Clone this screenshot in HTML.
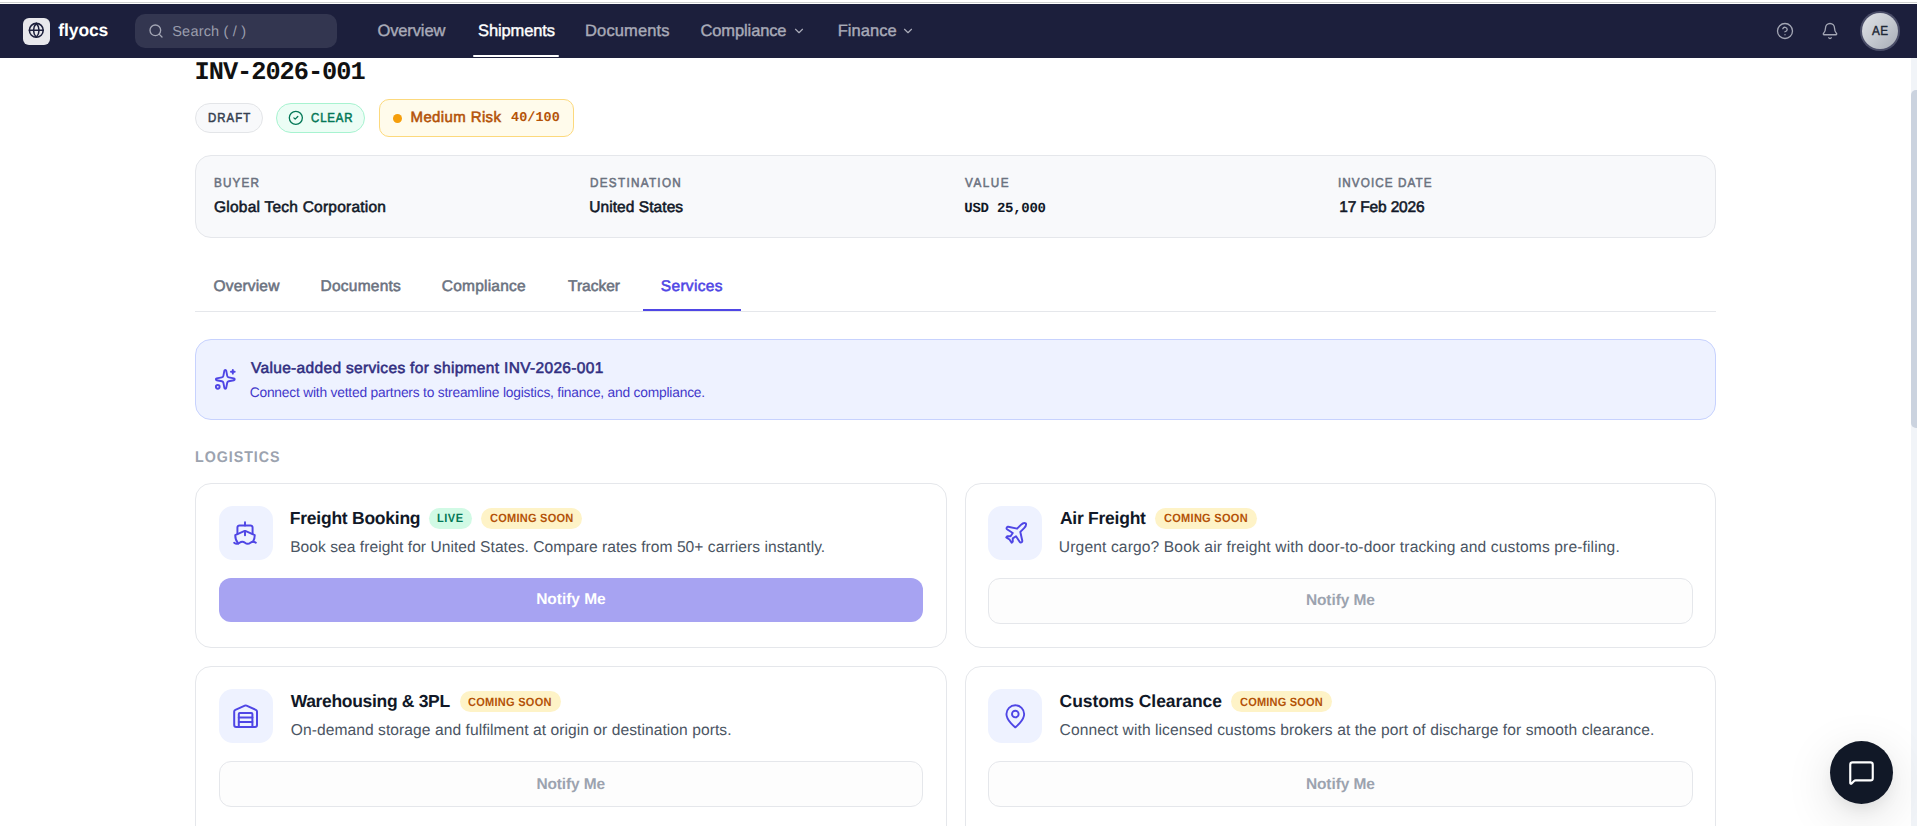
<!DOCTYPE html>
<html><head><meta charset="utf-8">
<style>
*{box-sizing:border-box;margin:0;padding:0}
html,body{width:1917px;height:826px;overflow:hidden;background:#fff}
body{position:relative;font-family:"Liberation Sans",sans-serif}
.a{position:absolute}
.t{position:absolute;white-space:nowrap;line-height:normal;text-rendering:geometricPrecision}
svg{position:absolute;overflow:visible}
.card{position:absolute;border:1px solid #e5e7eb;border-radius:16px;background:#fff}
.ibox{position:absolute;width:54px;height:54px;border-radius:14px;background:#eef2ff}
.badge{position:absolute;height:21px;border-radius:10.5px}
.btn2{position:absolute;border:1px solid #e5e7eb;border-radius:12px;background:#fdfdfd}
</style></head><body>
<!-- top strip -->
<div class="a" style="left:0;top:2px;width:1917px;height:1px;background:#cfd1d0"></div>
<!-- navbar -->
<div class="a" style="left:0;top:4px;width:1917px;height:54px;background:#1c1f3c"></div>
<div class="a" style="left:23px;top:18px;width:27px;height:27px;border-radius:6px;background:#e8e8ec"></div>
<svg style="left:27.5px;top:22.4px" width="16.6" height="16.6" viewBox="0 0 24 24" fill="none" stroke="#1c1f3c" stroke-width="2.2" stroke-linecap="round" stroke-linejoin="round"><circle cx="12" cy="12" r="10"/><path d="M12 2a14.5 14.5 0 0 0 0 20 14.5 14.5 0 0 0 0-20"/><path d="M2 12h20"/></svg>
<div class="a" style="left:135px;top:14px;width:202px;height:34px;border-radius:10px;background:#333650"></div>
<svg style="left:147.7px;top:23px" width="16" height="16" viewBox="0 0 24 24" fill="none" stroke="#a3a6b4" stroke-width="2" stroke-linecap="round" stroke-linejoin="round"><circle cx="11" cy="11" r="8"/><path d="m21 21-4.3-4.3"/></svg>
<div class="a" style="left:473px;top:55px;width:86px;height:2px;border-radius:1px;background:#fff"></div>
<svg style="left:792px;top:24px" width="14" height="14" viewBox="0 0 24 24" fill="none" stroke="#a9abb8" stroke-width="2" stroke-linecap="round" stroke-linejoin="round"><path d="m6 9 6 6 6-6"/></svg>
<svg style="left:901px;top:24px" width="14" height="14" viewBox="0 0 24 24" fill="none" stroke="#a9abb8" stroke-width="2" stroke-linecap="round" stroke-linejoin="round"><path d="m6 9 6 6 6-6"/></svg>
<svg style="left:1776px;top:22px" width="18" height="18" viewBox="0 0 24 24" fill="none" stroke="#a3a6b4" stroke-width="1.75" stroke-linecap="round" stroke-linejoin="round"><circle cx="12" cy="12" r="10"/><path d="M9.09 9a3 3 0 0 1 5.83 1c0 2-3 3-3 3"/><path d="M12 17h.01"/></svg>
<svg style="left:1821px;top:22px" width="18" height="18" viewBox="0 0 24 24" fill="none" stroke="#a3a6b4" stroke-width="1.75" stroke-linecap="round" stroke-linejoin="round"><path d="M10.268 21a2 2 0 0 0 3.464 0"/><path d="M3.262 15.326A1 1 0 0 0 4 17h16a1 1 0 0 0 .74-1.673C19.41 13.956 18 12.499 18 8A6 6 0 0 0 6 8c0 4.499-1.411 5.956-2.738 7.326"/></svg>
<div class="a" style="left:1860px;top:11px;width:40px;height:40px;border-radius:50%;background:#4a4d68"></div>
<div class="a" style="left:1862px;top:13px;width:36px;height:36px;border-radius:50%;background:linear-gradient(135deg,#dfe1e6 0%,#c6cad1 50%,#a7acb6 100%)"></div>

<!-- scrollbar -->
<div class="a" style="left:1911px;top:58px;width:6px;height:768px;background:#f1f4f8"></div>
<div class="a" style="left:1911px;top:90px;width:6px;height:338px;border-radius:5px 0 0 5px;background:#cbd3df"></div>

<!-- badges -->
<div class="a" style="left:195px;top:103px;width:68px;height:30px;border-radius:15px;background:#f8f9fb;border:1px solid #e3e5e8"></div>
<div class="a" style="left:276px;top:103px;width:89px;height:30px;border-radius:15px;background:#ecfdf5;border:1px solid #a7f3d0"></div>
<svg style="left:288px;top:109.85px" width="15.7" height="15.7" viewBox="0 0 24 24" fill="none" stroke="#047857" stroke-width="2" stroke-linecap="round" stroke-linejoin="round"><circle cx="12" cy="12" r="10"/><path d="m9 12 2 2 4-4"/></svg>
<div class="a" style="left:379px;top:99px;width:195px;height:38px;border-radius:10px;background:#fffbeb;border:1px solid #fcd97d"></div>
<div class="a" style="left:393px;top:113.5px;width:9px;height:9px;border-radius:50%;background:#f59e0b"></div>

<!-- info card -->
<div class="a" style="left:195px;top:155px;width:1521px;height:83px;border-radius:16px;background:#f8f9fb;border:1px solid #e5e7eb"></div>

<!-- tabs -->
<div class="a" style="left:195px;top:311px;width:1521px;height:1px;background:#e5e7eb"></div>
<div class="a" style="left:643px;top:309px;width:98px;height:2px;background:#4f46e5"></div>

<!-- banner -->
<div class="a" style="left:195px;top:339px;width:1521px;height:81px;border-radius:16px;background:#eef2ff;border:1px solid #c7d2fe"></div>
<svg style="left:213.9px;top:367.9px" width="22.6" height="22.6" viewBox="0 0 24 24" fill="none" stroke="#4f46e5" stroke-width="2" stroke-linecap="round" stroke-linejoin="round"><path d="M11.017 2.814a1 1 0 0 1 1.966 0l1.051 5.558a2 2 0 0 0 1.594 1.594l5.558 1.051a1 1 0 0 1 0 1.966l-5.558 1.051a2 2 0 0 0-1.594 1.594l-1.051 5.558a1 1 0 0 1-1.966 0l-1.051-5.558a2 2 0 0 0-1.594-1.594l-5.558-1.051a1 1 0 0 1 0-1.966l5.558-1.051a2 2 0 0 0 1.594-1.594z"/><path d="M20 2v4"/><path d="M22 4h-4"/><circle cx="4" cy="20" r="2"/></svg>

<!-- cards -->
<div class="card" style="left:195px;top:483px;width:752px;height:165px"></div>
<div class="card" style="left:965px;top:483px;width:751px;height:165px"></div>
<div class="card" style="left:195px;top:666px;width:752px;height:200px"></div>
<div class="card" style="left:965px;top:666px;width:751px;height:200px"></div>

<div class="ibox" style="left:219px;top:506px"></div>
<div class="ibox" style="left:988px;top:506px"></div>
<div class="ibox" style="left:219px;top:689px"></div>
<div class="ibox" style="left:988px;top:689px"></div>

<svg style="left:232px;top:520.2px" width="26" height="26" viewBox="0 0 24 24" fill="none" stroke="#4f46e5" stroke-width="1.8" stroke-linecap="round" stroke-linejoin="round"><path d="M12 10.189V14"/><path d="M12 2v3"/><path d="M19 13V7a2 2 0 0 0-2-2H7a2 2 0 0 0-2 2v6"/><path d="M19.38 20A11.6 11.6 0 0 0 21 14l-8.188-3.639a2 2 0 0 0-1.624 0L3 14a11.6 11.6 0 0 0 2.81 7.76"/><path d="M2 21c.6.5 1.2 1 2.5 1 2.5 0 2.5-2 5-2 1.3 0 1.9.5 2.5 1s1.2 1 2.5 1c2.5 0 2.5-2 5-2 1.3 0 1.9.5 2.5 1"/></svg>
<svg style="left:1002.6px;top:519.9px" width="26" height="26" viewBox="0 0 24 24" fill="none" stroke="#4f46e5" stroke-width="1.8" stroke-linecap="round" stroke-linejoin="round"><path d="M17.8 19.2 16 11l3.5-3.5C21 6 21.5 4 21 3c-1-.5-3 0-4.5 1.5L13 8 4.8 6.2c-.5-.1-.9.1-1.1.5l-.3.5c-.2.5-.1 1 .3 1.3L9 12l-2 3H4l-1 1 3 2 2 3 1-1v-3l3-2 3.5 5.3c.3.4.8.5 1.3.3l.5-.2c.4-.3.6-.7.5-1.2z"/></svg>
<svg style="left:226px;top:696px" width="40" height="40" viewBox="0 0 40 40" fill="none" stroke="#4f46e5" stroke-width="2" stroke-linecap="round" stroke-linejoin="round"><path d="M8.2 29V15.6a2 2 0 0 1 1.2-1.8L18.8 9.6a2 2 0 0 1 1.7 0L29.8 13.8a2 2 0 0 1 1.2 1.8V29a2 2 0 0 1-2 2H10.2a2 2 0 0 1-2-2Z"/><path d="M12.8 31V18a1 1 0 0 1 1-1H25.4a1 1 0 0 1 1 1V31"/><path d="M12.8 21.4H26.4"/><path d="M12.8 26H26.4"/></svg>
<svg style="left:1002px;top:703.2px" width="26.6" height="26.6" viewBox="0 0 24 24" fill="none" stroke="#4f46e5" stroke-width="1.7" stroke-linecap="round" stroke-linejoin="round"><path d="M20 10c0 6-8 12-8 12s-8-6-8-12a8 8 0 0 1 16 0Z"/><circle cx="12" cy="10" r="3"/></svg>

<!-- badges in cards -->
<div class="badge" style="left:429px;top:508px;width:43px;background:#d1fae5"></div>
<div class="badge" style="left:481px;top:508px;width:101px;background:#fef3c7"></div>
<div class="badge" style="left:1155px;top:508px;width:102px;background:#fef3c7"></div>
<div class="badge" style="left:460px;top:691px;width:101px;background:#fef3c7"></div>
<div class="badge" style="left:1231px;top:691px;width:101px;background:#fef3c7"></div>

<!-- buttons -->
<div class="a" style="left:219px;top:578px;width:704px;height:44px;border-radius:12px;background:#a7a3f2"></div>
<div class="btn2" style="left:988px;top:578px;width:705px;height:46px"></div>
<div class="btn2" style="left:219px;top:761px;width:704px;height:46px"></div>
<div class="btn2" style="left:988px;top:761px;width:705px;height:46px"></div>

<!-- chat fab -->
<div class="a" style="left:1830px;top:741px;width:63px;height:63px;border-radius:50%;background:#111827;box-shadow:0 12px 48px rgba(0,0,0,0.13),0 8px 16px -4px rgba(0,0,0,0.08)"></div>
<svg style="left:1848px;top:759px" width="27" height="27" viewBox="0 0 24 24" fill="none" stroke="#fff" stroke-width="1.9" stroke-linecap="round" stroke-linejoin="round"><path d="M22 17a2 2 0 0 1-2 2H6.828a2 2 0 0 0-1.414.586l-2.202 2.202A.71.71 0 0 1 2 21.286V5a2 2 0 0 1 2-2h16a2 2 0 0 1 2 2z"/></svg>

<div class="t" id="t_logo" style="left:58.32px;top:20.36px;font-size:17.5px;font-weight:700;color:#ffffff;font-family:'Liberation Sans', sans-serif;letter-spacing:-0.108px;">flyocs</div>
<div class="t" id="t_search" style="left:172.26px;top:23.58px;font-size:14.5px;font-weight:400;color:#9a9dac;font-family:'Liberation Sans', sans-serif;letter-spacing:0.196px;">Search ( / )</div>
<div class="t" id="t_nav1" style="left:377.50px;top:22.17px;font-size:16.5px;font-weight:400;color:#a9abb8;font-family:'Liberation Sans', sans-serif;letter-spacing:-0.129px;-webkit-text-stroke:0.4px #a9abb8;">Overview</div>
<div class="t" id="t_nav2" style="left:478.00px;top:22.17px;font-size:16.5px;font-weight:400;color:#ffffff;font-family:'Liberation Sans', sans-serif;letter-spacing:-0.113px;-webkit-text-stroke:0.4px #ffffff;">Shipments</div>
<div class="t" id="t_nav3" style="left:585.10px;top:22.17px;font-size:16.5px;font-weight:400;color:#a9abb8;font-family:'Liberation Sans', sans-serif;letter-spacing:0.113px;-webkit-text-stroke:0.4px #a9abb8;">Documents</div>
<div class="t" id="t_nav4" style="left:700.50px;top:22.17px;font-size:16.5px;font-weight:400;color:#a9abb8;font-family:'Liberation Sans', sans-serif;letter-spacing:-0.120px;-webkit-text-stroke:0.4px #a9abb8;">Compliance</div>
<div class="t" id="t_nav5" style="left:837.76px;top:22.17px;font-size:16.5px;font-weight:400;color:#a9abb8;font-family:'Liberation Sans', sans-serif;letter-spacing:0.030px;-webkit-text-stroke:0.4px #a9abb8;">Finance</div>
<div class="t" id="t_avatar" style="left:1871.81px;top:23.23px;font-size:13px;font-weight:400;color:#1f2937;font-family:'Liberation Sans', sans-serif;letter-spacing:0.630px;-webkit-text-stroke:0.45px #1f2937;transform:scaleX(0.9);transform-origin:0 0;">AE</div>
<div class="t" id="t_title" style="left:194.62px;top:58.48px;font-size:25.3px;font-weight:700;color:#111111;font-family:'Liberation Mono', monospace;letter-spacing:-1.015px;">INV-2026-001</div>
<div class="t" id="t_draft" style="left:208.06px;top:109.88px;font-size:13px;font-weight:400;color:#374151;font-family:'Liberation Sans', sans-serif;letter-spacing:1.170px;-webkit-text-stroke:0.55px #374151;transform:scaleX(0.88);transform-origin:0 0;">DRAFT</div>
<div class="t" id="t_clear" style="left:310.76px;top:109.88px;font-size:13px;font-weight:400;color:#047857;font-family:'Liberation Sans', sans-serif;letter-spacing:0.990px;-webkit-text-stroke:0.55px #047857;transform:scaleX(0.88);transform-origin:0 0;">CLEAR</div>
<div class="t" id="t_risk" style="left:410.52px;top:108.92px;font-size:15px;font-weight:400;color:#b45309;font-family:'Liberation Sans', sans-serif;letter-spacing:0.378px;-webkit-text-stroke:0.55px #b45309;">Medium Risk</div>
<div class="t" id="t_score" style="left:511.00px;top:111.25px;font-size:13.5px;font-weight:700;color:#b45309;font-family:'Liberation Mono', monospace;letter-spacing:0.036px;">40/100</div>
<div class="t" id="t_lab0" style="left:214.00px;top:175.43px;font-size:13px;font-weight:400;color:#6b7280;font-family:'Liberation Sans', sans-serif;letter-spacing:1.260px;-webkit-text-stroke:0.55px #6b7280;transform:scaleX(0.9);transform-origin:0 0;">BUYER</div>
<div class="t" id="t_val0" style="left:214.00px;top:199.07px;font-size:15.5px;font-weight:400;color:#111827;font-family:'Liberation Sans', sans-serif;letter-spacing:0.229px;-webkit-text-stroke:0.55px #111827;">Global Tech Corporation</div>
<div class="t" id="t_lab1" style="left:589.72px;top:175.43px;font-size:13px;font-weight:400;color:#6b7280;font-family:'Liberation Sans', sans-serif;letter-spacing:1.440px;-webkit-text-stroke:0.55px #6b7280;transform:scaleX(0.9);transform-origin:0 0;">DESTINATION</div>
<div class="t" id="t_val1" style="left:589.18px;top:199.07px;font-size:15.5px;font-weight:400;color:#111827;font-family:'Liberation Sans', sans-serif;letter-spacing:0.075px;-webkit-text-stroke:0.55px #111827;">United States</div>
<div class="t" id="t_lab2" style="left:965.06px;top:175.43px;font-size:13px;font-weight:400;color:#6b7280;font-family:'Liberation Sans', sans-serif;letter-spacing:1.710px;-webkit-text-stroke:0.55px #6b7280;transform:scaleX(0.9);transform-origin:0 0;">VALUE</div>
<div class="t" id="t_val2" style="left:964.34px;top:201.44px;font-size:14px;font-weight:700;color:#111827;font-family:'Liberation Mono', monospace;letter-spacing:-0.260px;">USD 25,000</div>
<div class="t" id="t_lab3" style="left:1338.26px;top:175.43px;font-size:13px;font-weight:400;color:#6b7280;font-family:'Liberation Sans', sans-serif;letter-spacing:1.195px;-webkit-text-stroke:0.55px #6b7280;transform:scaleX(0.9);transform-origin:0 0;">INVOICE DATE</div>
<div class="t" id="t_val3" style="left:1339.34px;top:199.07px;font-size:15.5px;font-weight:400;color:#111827;font-family:'Liberation Sans', sans-serif;letter-spacing:-0.180px;-webkit-text-stroke:0.55px #111827;">17 Feb 2026</div>
<div class="t" id="t_tab0" style="left:213.50px;top:277.87px;font-size:15.5px;font-weight:400;color:#6b7280;font-family:'Liberation Sans', sans-serif;letter-spacing:0.180px;-webkit-text-stroke:0.55px #6b7280;">Overview</div>
<div class="t" id="t_tab1" style="left:320.60px;top:277.87px;font-size:15.5px;font-weight:400;color:#6b7280;font-family:'Liberation Sans', sans-serif;letter-spacing:0.225px;-webkit-text-stroke:0.55px #6b7280;">Documents</div>
<div class="t" id="t_tab2" style="left:441.76px;top:277.87px;font-size:15.5px;font-weight:400;color:#6b7280;font-family:'Liberation Sans', sans-serif;letter-spacing:0.220px;-webkit-text-stroke:0.55px #6b7280;">Compliance</div>
<div class="t" id="t_tab3" style="left:568.00px;top:277.87px;font-size:15.5px;font-weight:400;color:#6b7280;font-family:'Liberation Sans', sans-serif;letter-spacing:0.000px;-webkit-text-stroke:0.55px #6b7280;">Tracker</div>
<div class="t" id="t_tab4" style="left:660.76px;top:277.87px;font-size:15.5px;font-weight:400;color:#4f46e5;font-family:'Liberation Sans', sans-serif;letter-spacing:0.334px;-webkit-text-stroke:0.55px #4f46e5;">Services</div>
<div class="t" id="t_ban1" style="left:250.94px;top:359.92px;font-size:15.5px;font-weight:400;color:#312e81;font-family:'Liberation Sans', sans-serif;letter-spacing:0.332px;-webkit-text-stroke:0.55px #312e81;">Value-added services for shipment INV-2026-001</div>
<div class="t" id="t_ban2" style="left:249.68px;top:385.01px;font-size:13.8px;font-weight:400;color:#4338ca;font-family:'Liberation Sans', sans-serif;letter-spacing:-0.210px;">Connect with vetted partners to streamline logistics, finance, and compliance.</div>
<div class="t" id="t_logi" style="left:194.60px;top:448.87px;font-size:15.5px;font-weight:700;color:#9ca3af;font-family:'Liberation Sans', sans-serif;letter-spacing:1.035px;transform:scaleX(0.92);transform-origin:0 0;">LOGISTICS</div>
<div class="t" id="t_ct0" style="left:289.82px;top:508.21px;font-size:17.5px;font-weight:700;color:#111827;font-family:'Liberation Sans', sans-serif;letter-spacing:-0.244px;">Freight Booking</div>
<div class="t" id="t_cd0" style="left:290.18px;top:539.13px;font-size:15.6px;font-weight:400;color:#4b5563;font-family:'Liberation Sans', sans-serif;letter-spacing:0.035px;">Book sea freight for United States. Compare rates from 50+ carriers instantly.</div>
<div class="t" id="t_ct1" style="left:1059.94px;top:508.21px;font-size:17.5px;font-weight:700;color:#111827;font-family:'Liberation Sans', sans-serif;letter-spacing:-0.252px;">Air Freight</div>
<div class="t" id="t_cd1" style="left:1058.86px;top:539.13px;font-size:15.6px;font-weight:400;color:#4b5563;font-family:'Liberation Sans', sans-serif;letter-spacing:0.131px;">Urgent cargo? Book air freight with door-to-door tracking and customs pre-filing.</div>
<div class="t" id="t_ct2" style="left:290.66px;top:691.21px;font-size:17.5px;font-weight:700;color:#111827;font-family:'Liberation Sans', sans-serif;letter-spacing:-0.326px;">Warehousing &amp; 3PL</div>
<div class="t" id="t_cd2" style="left:290.84px;top:722.13px;font-size:15.6px;font-weight:400;color:#4b5563;font-family:'Liberation Sans', sans-serif;letter-spacing:0.060px;">On-demand storage and fulfilment at origin or destination ports.</div>
<div class="t" id="t_ct3" style="left:1059.60px;top:691.21px;font-size:17.5px;font-weight:700;color:#111827;font-family:'Liberation Sans', sans-serif;letter-spacing:-0.067px;">Customs Clearance</div>
<div class="t" id="t_cd3" style="left:1059.60px;top:722.13px;font-size:15.6px;font-weight:400;color:#4b5563;font-family:'Liberation Sans', sans-serif;letter-spacing:0.074px;">Connect with licensed customs brokers at the port of discharge for smooth clearance.</div>
<div class="t" id="t_live" style="left:437.10px;top:511.19px;font-size:12px;font-weight:700;color:#047857;font-family:'Liberation Sans', sans-serif;letter-spacing:0.540px;transform:scaleX(0.92);transform-origin:0 0;">LIVE</div>
<div class="t" id="t_cs0" style="left:490.28px;top:510.59px;font-size:12px;font-weight:700;color:#b45309;font-family:'Liberation Sans', sans-serif;letter-spacing:0.252px;transform:scaleX(0.92);transform-origin:0 0;">COMING SOON</div>
<div class="t" id="t_cs1" style="left:1164.28px;top:510.59px;font-size:12px;font-weight:700;color:#b45309;font-family:'Liberation Sans', sans-serif;letter-spacing:0.288px;transform:scaleX(0.92);transform-origin:0 0;">COMING SOON</div>
<div class="t" id="t_cs2" style="left:468.44px;top:694.59px;font-size:12px;font-weight:700;color:#b45309;font-family:'Liberation Sans', sans-serif;letter-spacing:0.270px;transform:scaleX(0.92);transform-origin:0 0;">COMING SOON</div>
<div class="t" id="t_cs3" style="left:1239.72px;top:694.59px;font-size:12px;font-weight:700;color:#b45309;font-family:'Liberation Sans', sans-serif;letter-spacing:0.198px;transform:scaleX(0.92);transform-origin:0 0;">COMING SOON</div>
<div class="t" id="t_btn0" style="left:536.16px;top:590.87px;font-size:15.5px;font-weight:700;color:#ffffff;font-family:'Liberation Sans', sans-serif;letter-spacing:-0.023px;">Notify Me</div>
<div class="t" id="t_btn1" style="left:1305.88px;top:591.67px;font-size:15.5px;font-weight:700;color:#9ca3af;font-family:'Liberation Sans', sans-serif;letter-spacing:-0.090px;">Notify Me</div>
<div class="t" id="t_btn2" style="left:536.38px;top:775.67px;font-size:15.5px;font-weight:700;color:#9ca3af;font-family:'Liberation Sans', sans-serif;letter-spacing:-0.135px;">Notify Me</div>
<div class="t" id="t_btn3" style="left:1305.88px;top:775.67px;font-size:15.5px;font-weight:700;color:#9ca3af;font-family:'Liberation Sans', sans-serif;letter-spacing:-0.090px;">Notify Me</div>
</body></html>
